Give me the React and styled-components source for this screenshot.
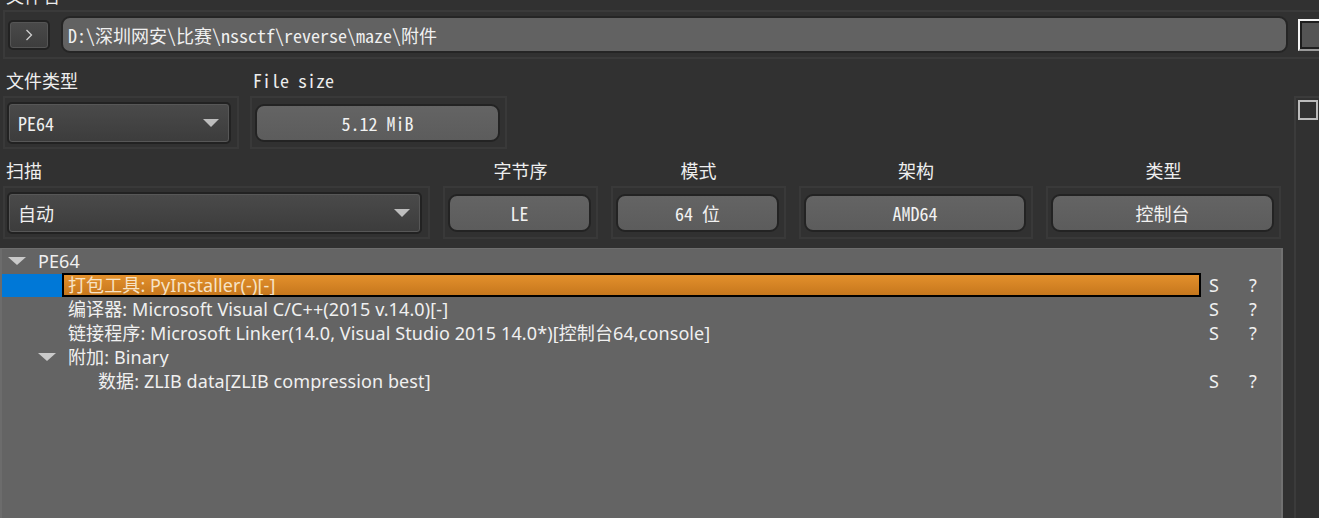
import React from 'react'
import styled, { createGlobalStyle } from 'styled-components'

const GlobalStyle = createGlobalStyle`
  body {
    margin: 0;
    background: #313131;
  }
`;

const MONO = `"Noto Sans Mono CJK SC", "Liberation Mono", "Noto Sans CJK SC", monospace`;
const UI = `"Noto Sans", "Noto Sans CJK SC", sans-serif`;

const Page = styled.div`
  width: 1319px;
  height: 518px;
  overflow: hidden;
  background: #313131;
  display: flex;
  flex-direction: column;
  font-family: ${MONO};
  color: #ececec;
`;

const TopLabel = styled.div`
  height: 24px;
  line-height: 24px;
  margin-top: -17px;
  padding-left: 6px;
  font-size: 18px;
  flex: none;
`;

const PathGroup = styled.div`
  flex: none;
  margin: 3px 0 0 3px;
  width: 1345px;
  height: 49px;
  box-sizing: border-box;
  border: 2px solid #3a3a3a;
  display: flex;
  align-items: center;
  padding: 0 3px;
`;

const NavButton = styled.div`
  width: 42px;
  height: 30px;
  box-sizing: border-box;
  border: 2px solid #222;
  border-radius: 5px;
  box-shadow: inset 0 0 0 1px #555;
  background: linear-gradient(#4a4a4a, #3d3d3d);
  display: flex;
  align-items: center;
  justify-content: center;
  margin-right: 11px;
`;

const PathField = styled.div`
  width: 1227px;
  height: 37px;
  box-sizing: border-box;
  border: 2px solid #252525;
  border-radius: 9px;
  background: #626262;
  padding-left: 5px;
  font-size: 18px;
  line-height: 35px;
  color: #f0f0f0;
  white-space: nowrap;
`;

const FocusButton = styled.div`
  margin-left: 10px;
  width: 40px;
  height: 32px;
  box-sizing: border-box;
  border: 2px solid #f4f4f4;
  border-bottom-color: #9a9a9a;
  box-shadow: inset 0 0 0 2px #1e1e1e;
  background: #545454;
`;

const Body = styled.div`
  flex: 1;
  min-height: 0;
  display: flex;
`;

const Main = styled.div`
  width: 1283px;
  flex: none;
  display: flex;
  flex-direction: column;
`;

const FieldRow = styled.div`
  display: flex;
  gap: ${p => p.$gap}px;
  padding-left: 3px;
  margin-top: 9px;
`;

const Field = styled.div`
  display: flex;
  flex-direction: column;
`;

const FieldLabel = styled.div`
  height: 24px;
  line-height: 24px;
  margin-bottom: 4px;
  padding-left: ${p => (p.$center ? 0 : 3)}px;
  text-align: ${p => (p.$center ? 'center' : 'left')};
  font-size: 18px;
  color: #eeeeee;
`;

const Frame = styled.div`
  width: ${p => p.$w}px;
  height: 53px;
  box-sizing: border-box;
  border: 2px solid #393939;
  padding: 0 2px;
  display: flex;
  align-items: center;
`;

const Combo = styled.div`
  flex: 1;
  height: 42px;
  margin-right: 4px;
  box-sizing: border-box;
  border: 2px solid #222;
  border-radius: 5px;
  box-shadow: inset 0 0 0 1px #575757;
  background: linear-gradient(#4a4a4a, #3c3c3c);
  display: flex;
  align-items: center;
  justify-content: space-between;
  padding: 0 10px 0 9px;
  font-size: 18px;
  color: #f0f0f0;
`;

const Arrow = styled.span`
  width: 0;
  height: 0;
  border-left: 8px solid transparent;
  border-right: 8px solid transparent;
  border-top: 8px solid #bdbdbd;
`;

const ValueButton = styled.div`
  flex: 1;
  height: 38px;
  margin: 0 3px 0 1px;
  box-sizing: border-box;
  border: 2px solid #232323;
  border-radius: 9px;
  background: linear-gradient(#646464, #5c5c5c);
  display: flex;
  align-items: center;
  justify-content: center;
  font-size: 18px;
  color: #f2f2f2;
`;

const Tree = styled.div`
  flex: 1;
  margin-top: 9px;
  background: #646464;
  border-left: 2px solid #6c6c6c;
  border-right: 2px solid #717171;
  border-top: 1px solid #6e6e6e;
  font-family: ${UI};
  font-size: 18px;
  letter-spacing: 0.1px;
`;

const Row = styled.div`
  display: grid;
  grid-template-columns: 1fr 40px 40px;
  height: 24px;
  color: #f0f0f0;
`;

const NameCell = styled.div`
  display: flex;
  min-width: 0;
`;

const Indent = styled.div`
  width: ${p => (p.$level + 1) * 30}px;
  flex: none;
  display: flex;
  align-items: center;
  background: ${p => (p.$selected ? '#0078d7' : 'transparent')};
  margin: ${p => (p.$selected ? '1px 0 0' : '0')};
`;

const Spacer = styled.div`
  width: ${p => p.$level * 30}px;
  flex: none;
`;

const Expander = styled.div`
  width: 30px;
  flex: none;
  padding-left: 6px;
  box-sizing: border-box;
  display: flex;
  align-items: center;
`;

const Triangle = styled.span`
  width: 0;
  height: 0;
  border-left: 9px solid transparent;
  border-right: 9px solid transparent;
  border-top: 8px solid #cacaca;
`;

const Label = styled.div`
  flex: 1;
  box-sizing: border-box;
  height: 24px;
  line-height: 20px;
  padding: 0 4px;
  border: 2px solid ${p => (p.$selected ? '#000' : 'transparent')};
  background: ${p => (p.$selected ? 'linear-gradient(#e3902c, #c6771d)' : 'transparent')};
  color: ${p => (p.$selected ? '#f7e3c6' : '#f0f0f0')};
  white-space: nowrap;
  overflow: hidden;
`;

const Cell = styled.div`
  padding-left: 8px;
  line-height: 24px;
`;

const Sidebar = styled.div`
  flex: 1;
  margin: 37px 0 0 11px;
  border-left: 2px solid #3b3b3b;
  border-top: 2px solid #3b3b3b;
  padding: 2px 0 0 2px;
`;

const CheckBox = styled.div`
  width: 20px;
  height: 20px;
  box-sizing: border-box;
  border: 2px solid #bcbcbc;
`;

const rows = [
  { level: 0, text: 'PE64', expandable: true },
  { level: 1, text: '打包工具: PyInstaller(-)[-]', selected: true, s: 'S', q: '?' },
  { level: 1, text: '编译器: Microsoft Visual C/C++(2015 v.14.0)[-]', s: 'S', q: '?' },
  { level: 1, text: '链接程序: Microsoft Linker(14.0, Visual Studio 2015 14.0*)[控制台64,console]', s: 'S', q: '?' },
  { level: 1, text: '附加: Binary', expandable: true },
  { level: 2, text: '数据: ZLIB data[ZLIB compression best]', s: 'S', q: '?' },
];

const infoFields = [
  { label: '字节序', value: 'LE', w: 155 },
  { label: '模式', value: '64 位', w: 175 },
  { label: '架构', value: 'AMD64', w: 234 },
  { label: '类型', value: '控制台', w: 235 },
];

export default function App() {
  return (
    <Page>
      <GlobalStyle />
      <TopLabel>文件名</TopLabel>
      <PathGroup>
        <NavButton>
          <svg width="8" height="12" viewBox="0 0 8 12">
            <polyline points="1.5,1 6.5,6 1.5,11" fill="none" stroke="#cfcfcf" strokeWidth="1.3" />
          </svg>
        </NavButton>
        <PathField>D:\深圳网安\比赛\nssctf\reverse\maze\附件</PathField>
        <FocusButton />
      </PathGroup>
      <Body>
        <Main>
          <FieldRow $gap={11}>
            <Field>
              <FieldLabel>文件类型</FieldLabel>
              <Frame $w={236}>
                <Combo>PE64<Arrow /></Combo>
              </Frame>
            </Field>
            <Field>
              <FieldLabel>File size</FieldLabel>
              <Frame $w={257}>
                <ValueButton>5.12 MiB</ValueButton>
              </Frame>
            </Field>
          </FieldRow>
          <FieldRow $gap={13}>
            <Field>
              <FieldLabel>扫描</FieldLabel>
              <Frame $w={427}>
                <Combo>自动<Arrow /></Combo>
              </Frame>
            </Field>
            {infoFields.map(f => (
              <Field key={f.label}>
                <FieldLabel $center>{f.label}</FieldLabel>
                <Frame $w={f.w}>
                  <ValueButton>{f.value}</ValueButton>
                </Frame>
              </Field>
            ))}
          </FieldRow>
          <Tree>
            {rows.map((r, i) => (
              <Row key={i}>
                <NameCell>
                  <Indent $level={r.level} $selected={r.selected}>
                    <Spacer $level={r.level} />
                    {r.expandable && (
                      <Expander>
                        <Triangle />
                      </Expander>
                    )}
                  </Indent>
                  <Label $selected={r.selected}>{r.text}</Label>
                </NameCell>
                <Cell>{r.s}</Cell>
                <Cell>{r.q}</Cell>
              </Row>
            ))}
          </Tree>
        </Main>
        <Sidebar>
          <CheckBox />
        </Sidebar>
      </Body>
    </Page>
  )
}
